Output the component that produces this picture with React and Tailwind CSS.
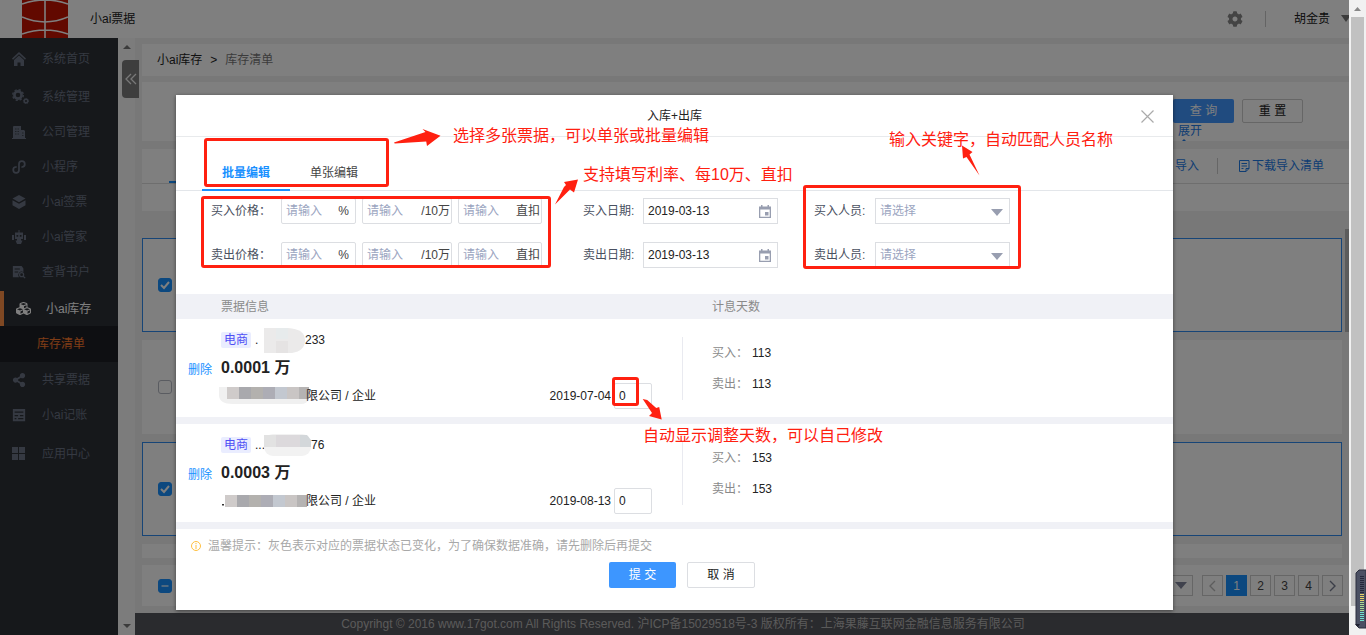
import { useState } from "react";
import { FaCubes, FaShareAlt, FaCog } from "react-icons/fa";

const MENU_TOP = [
  { name: "系统管理", icon: GearsIcon },
  { name: "公司管理", icon: BuildingIcon },
  { name: "小程序", icon: MiniAppIcon },
  { name: "小ai签票", icon: StackIcon },
  { name: "小ai管家", icon: RobotIcon },
  { name: "查背书户", icon: SearchDocIcon },
];

const MENU_BOTTOM = [
  { name: "共享票据", icon: FaShareAlt },
  { name: "小ai记账", icon: LedgerIcon },
];

const BILLS = [
  { id: 1, no: "233", dots: ".", amount: "0.0001 万", date: "2019-07-04", days: 113 },
  { id: 2, no: "76", dots: "...", amount: "0.0003 万", date: "2019-08-13", days: 153 },
];

export default function App() {
  return (
    <div className="flex h-screen overflow-hidden bg-[#f1f1f1] font-['Liberation_Sans','Noto_Sans_CJK_SC',sans-serif] text-xs text-[#222]">
      <div className="relative flex min-w-0 flex-1 flex-col bg-[#f0f0f0]">
        <Header />
        <div className="flex min-h-0 flex-1">
          <Sidebar />
          <SideScroll />
          <Content />
        </div>
        <div className="absolute inset-0 flex items-start justify-center bg-black/50 pt-[95px]">
          <BillDialog />
        </div>
      </div>
      <PageScroll />
    </div>
  );
}

function Header() {
  return (
    <header className="flex h-[38px] shrink-0 items-center overflow-hidden bg-white pl-[22px]">
      <svg width="46" height="38" viewBox="0 0 46 38" fill="none" stroke="#fff" strokeWidth="1.6">
        <path d="M0 0h46v38H0z" fill="#c41200" stroke="none" />
        <path d="M23 0v38M0 4Q23-4 46 4M0 17Q23 27 46 17M0 34Q23 26 46 34" />
      </svg>
      <h1 className="ml-[22px] leading-4">小ai票据</h1>
      <div className="ml-auto flex items-center">
        <FaCog size={16} className="text-[#888]" />
        <span className="ml-[22px] h-4 w-px bg-[#c8c8c8]" />
        <span className="ml-7 leading-4">胡金贵</span>
        <svg width="8" height="8" viewBox="0 0 8 8" className="ml-[11px]" fill="#777">
          <path d="M0 0h10L5 7z" />
        </svg>
      </div>
    </header>
  );
}

function MenuItem({ name, icon: Icon }) {
  return (
    <a href="#" className="flex h-[35px] items-center pl-3 text-[#6a7384]">
      <span className="w-[30px]"><Icon size={14} /></span>
      {name}
    </a>
  );
}

function Sidebar() {
  return (
    <nav className="w-[118px] shrink-0 bg-[#2d3037] pt-[3px]">
      <MenuItem name="系统首页" icon={HomeIcon} />
      <div className="pb-[2px] pt-[3px]">
        {MENU_TOP.map((m) => <MenuItem key={m.name} {...m} />)}
      </div>
      <a href="#" className="flex h-[35px] items-center border-l-4 border-[#ff9147] pl-3 text-white">
        <span className="w-[30px]"><FaCubes size={15} /></span>
        小ai库存
      </a>
      <a href="#" className="flex h-9 items-center bg-[#1d1f24] pl-[37px] text-[#ff7a2c]">
        库存清单
      </a>
      <div className="pb-1">
        {MENU_BOTTOM.map((m) => <MenuItem key={m.name} {...m} />)}
      </div>
      <MenuItem name="应用中心" icon={AppsIcon} />
    </nav>
  );
}

function SideScroll() {
  return (
    <div className="relative flex w-[17px] shrink-0 flex-col items-center justify-between bg-[#f8f8f8] py-[7px]">
      <svg width="8" height="4" viewBox="0 0 8 4" fill="#777"><path d="M0 4l4-4 4 4z" /></svg>
      <svg width="8" height="4" viewBox="0 0 8 4" fill="#777"><path d="M0 0l4 4 4-4z" /></svg>
      <button aria-label="收起菜单" className="absolute left-1 top-[22px] flex h-[38px] w-[17px] items-center justify-center rounded-l bg-[#7c7c7c]">
        <svg width="12" height="12" viewBox="0 0 12 12" fill="none" stroke="#f0f0f0" strokeWidth="1.3">
          <path d="M6 1L1 6l5 5M11 1L6 6l5 5" />
        </svg>
      </button>
    </div>
  );
}

function CheckBox({ state, label }) {
  const [on, setOn] = useState(state !== "off");
  return (
    <label className="grid size-[14px] place-items-center">
      <input
        type="checkbox" aria-label={label} checked={on} onChange={(e) => setOn(e.target.checked)}
        className="col-start-1 row-start-1 size-[14px] appearance-none rounded-[3px] border border-[#b4b8c2] bg-white checked:border-[#1890ff] checked:bg-[#1890ff]"
      />
      {on && (
        <svg width="10" height="10" viewBox="0 0 10 10" className="pointer-events-none col-start-1 row-start-1" fill="none" stroke="#fff" strokeWidth={state === "part" ? 1.2 : 2}>
          <path d={state === "part" ? "M1.500 5h7" : "M1 5l3 3 5-6"} />
        </svg>
      )}
    </label>
  );
}

function Content() {
  return (
    <main className="flex min-w-0 flex-1 flex-col">
      <div className="flex min-h-0 flex-1 flex-col pl-[7px] pt-[6px]">
        <div className="flex h-8 shrink-0 items-center gap-2 bg-white pl-[15px] leading-4">
          <a href="#">小ai库存</a>
          <span>&gt;</span>
          <span className="text-[#777]">库存清单</span>
        </div>

        <section className="mt-[6px] flex h-[59px] shrink-0 justify-end overflow-hidden bg-white pr-[46px] pt-[17px]">
          <div>
            <div className="flex gap-2">
              <button className="h-6 w-[61px] rounded-[2px] bg-[#4096ff] text-white">查 询</button>
              <button className="h-6 w-[61px] rounded-[2px] border border-[#ccc] bg-white">重 置</button>
            </div>
            <a href="#" className="ml-[5px] flex w-6 flex-col items-center leading-4 text-[#1e7be6]">
              展开
              <svg width="6" height="4" viewBox="0 0 6 4" className="mr-3" fill="#1e7be6"><path d="M0 3l3-3 3 3z" /></svg>
            </a>
          </div>
        </section>

        <section className="mt-2 h-[62px] shrink-0 bg-white">
          <div className="flex h-[35px] items-center justify-end border-b border-[#ddd] pr-[25px] leading-4 text-[#1e7be6]">
            <span className="mr-auto ml-[27px] w-[60px] self-end border-b-2 border-[#1890ff]" />
            <a href="#">导入</a>
            <span className="ml-[18px] mr-[21px] h-4 w-px bg-[#ccc]" />
            <a href="#" className="flex items-center gap-[2px]">
              <svg width="11" height="12" viewBox="0 0 11 12" fill="none" stroke="currentColor">
                <path d="M7 11.500H.5V.5h9.500v8zM7 11.500V8.500h3M2.500 3.500h5.500M2.500 6h5.500M2.500 8.500h2" />
              </svg>
              下载导入清单
            </a>
          </div>
        </section>

        <div className="relative mr-[7px] mt-[27px] flex min-h-0 flex-1 flex-col gap-2 overflow-hidden">
          {["on", "off", "on", "off"].map((s, i) => (
            <div key={i} className={`flex h-[94px] shrink-0 items-center bg-white pl-4 ${s === "on" ? "border border-[#2f8bef] pl-[15px]" : ""}`}>
              <CheckBox state={s} label={`票据${i + 1}`} />
            </div>
          ))}
        </div>

        <div className="mb-[7px] mt-[7px] flex h-[41px] shrink-0 items-center gap-[3px] bg-white pl-4 pr-[6px]">
          <CheckBox state="part" label="全选" />
          <div className="ml-auto mr-[6px] flex h-[21px] w-[60px] items-center justify-end border border-[#ccc] pr-[5px]">
            <svg width="12" height="7" viewBox="0 0 12 7" fill="#80859a"><path d="M0 0h12L6 7z" /></svg>
          </div>
          <PageButton label="上一页"><Chevron d="M7 1L2 6l5 5" color="#bbb" /></PageButton>
          <button className="size-[21px] bg-[#1890ff] text-white">1</button>
          <PageButton>2</PageButton>
          <PageButton>3</PageButton>
          <PageButton>4</PageButton>
          <PageButton label="下一页"><Chevron d="M2 1l5 5-5 5" color="#777c90" /></PageButton>
        </div>
      </div>
      <div className="absolute right-0 top-[229px] h-[103px] w-1 bg-[#b8b8b8]" />
      <footer className="flex h-[22px] shrink-0 items-center justify-center bg-[#55565c] leading-4 text-[#b5b5b5]">
        <p className="pr-[118px]">Copyrihgt © 2016 www.17got.com All Rights Reserved. 沪ICP备15029518号-3 版权所有：上海果藤互联网金融信息服务有限公司</p>
      </footer>
    </main>
  );
}

function PageButton({ label, children }) {
  return (
    <button aria-label={label} className="flex size-[21px] items-center justify-center border border-[#ccc] bg-white text-[#444]">
      {children}
    </button>
  );
}

function Chevron({ d, color }) {
  return (
    <svg width="9" height="12" viewBox="0 0 9 12" fill="none" stroke={color} strokeWidth="1.4"><path d={d} /></svg>
  );
}

function BillDialog() {
  const [tab, setTab] = useState(0);
  return (
    <div role="dialog" aria-labelledby="dialog-title" className="relative w-[997px] bg-white pb-[22px] shadow-[0_1px_4px_rgba(0,0,0,0.5)]">
      <div className="relative flex h-[42px] items-center justify-center border-b border-[#e8eaec]">
        <h2 id="dialog-title" className="leading-4">入库+出库</h2>
        <button aria-label="关闭" className="absolute right-[19px] top-[15px]">
          <svg width="13" height="13" viewBox="0 0 13 13" stroke="#aaa" strokeWidth="1.2"><path d="M.5.5l12 12M12.500.5l-12 12" /></svg>
        </button>
      </div>

      <div className="flex h-[54px] items-end border-b border-[#e3e6ea] pl-[26px]">
        {["批量编辑", "单张编辑"].map((t, i) => (
          <button
            key={t} onClick={() => setTab(i)}
            className={`-mb-px border-b-2 px-5 pb-2 leading-4 ${
              tab === i ? "border-[#1890ff] font-bold text-[#1890ff]" : "border-transparent text-[#444]"
            }`}>
            {t}
          </button>
        ))}
      </div>

      <form className="flex h-[103px] flex-col gap-[18px] pl-[35px] pt-[7px]">
        <FormRow kind="买入" />
        <FormRow kind="卖出" />
      </form>

      <table className="w-full table-fixed border-separate border-spacing-0 text-left">
        <thead className="bg-[#f0f1f6] text-[#8a8a8a]">
          <tr className="h-[25px]">
            <th className="w-[506px] pl-[45px] font-normal leading-4">票据信息</th>
            <th className="pl-[30px] font-normal leading-4">计息天数</th>
          </tr>
        </thead>
        <tbody>
          {BILLS.map((b) => <BillRow key={b.id} bill={b} />)}
        </tbody>
      </table>

      <p className="mt-2 flex items-center gap-[7px] pl-[15px] leading-[18px] text-[#a8a8a8]">
        <svg width="10" height="10" viewBox="0 0 10 10" fill="none" stroke="#ffbf3f">
          <circle cx="5" cy="5" r="4.500" /><path d="M5 2v1.200M5 4v4" />
        </svg>
        温馨提示：灰色表示对应的票据状态已变化，为了确保数据准确，请先删除后再提交
      </p>
      <div className="mt-[7px] flex justify-center gap-[11px] pl-[15px]">
        <button className="h-[26px] w-[67px] rounded-[2px] bg-[#3d96ff] text-white">提 交</button>
        <button className="h-[26px] w-[68px] rounded-[2px] border border-[#dcdee2] bg-white">取 消</button>
      </div>

      <Annotations />
    </div>
  );
}

function PriceInput({ label, unit, className }) {
  return (
    <label className={`flex h-[26px] items-center rounded-[2px] border border-[#dcdee2] pl-1 ${className}`}>
      <input aria-label={label} placeholder="请输入" className="w-0 min-w-0 flex-1 outline-none placeholder:text-[#9ba5bf]" />
      <span className="shrink-0 text-[#444]">{unit}</span>
    </label>
  );
}

function FormRow({ kind }) {
  return (
    <div className="flex items-center text-[#495060]">
      <span className="w-[70px]">{kind}价格：</span>
      <PriceInput label={`${kind}利率`} unit="%" className="w-[75px] pr-[6px]" />
      <PriceInput label={`${kind}每10万`} unit="/10万" className="ml-[6px] w-[90px] pr-[1px]" />
      <PriceInput label={`${kind}直扣`} unit="直扣" className="ml-[6px] w-[84px] pr-[1px]" />
      <label className="ml-[41px] flex items-center">
        <span className="w-[60px]">{kind}日期:</span>
        <span className="flex h-[26px] w-[135px] items-center border border-[#dcdee2] pl-1 pr-[6px]">
          <input defaultValue="2019-03-13" className="w-0 min-w-0 flex-1 text-[#222] outline-none" />
          <svg width="12" height="13" viewBox="0 0 12 13" fill="#989eb0">
            <path d="M2 0h1.500v1.500h5V0H10v1.500h2V13H0V1.500h2zM1.300 4.500v7.200h9.400V4.500z" fillRule="evenodd" />
            <path d="M6 7h3.500v3.500H6z" />
          </svg>
        </span>
      </label>
      <label className="ml-9 flex items-center">
        <span className="w-[61px]">{kind}人员:</span>
        <span className="grid w-[135px] items-center">
          <select className="col-start-1 row-start-1 h-[26px] appearance-none border border-[#dcdee2] pl-1 text-[#9ba5bf] outline-none">
            <option>请选择</option>
          </select>
          <svg width="12" height="7" viewBox="0 0 12 7" fill="#989eb0" className="pointer-events-none col-start-1 row-start-1 mr-[7px] mt-[3px] justify-self-end">
            <path d="M0 0h12L6 7z" />
          </svg>
        </span>
      </label>
    </div>
  );
}

function BillRow({ bill }) {
  return (
    <tr className="h-[105px]">
      <td className="border-b-[7px] border-[#f0f1f6] align-top">
        <div className="flex">
          <a href="#" className="mt-[43px] w-[45px] pl-3 leading-4 text-[#1890ff]">删除</a>
          <div className="min-w-0 flex-1 pt-3">
            <div className="flex h-[18px] items-center">
              <span className="rounded-[2px] bg-[#eaedff] px-[3px] leading-4 text-[#4f4ff5]">电商</span>
              <span className="ml-1 w-[9px] leading-4">{bill.dots}</span>
              <NoMask wide={bill.id === 2} />
              <span className="leading-4">{bill.no}</span>
            </div>
            <div className="mt-[7px] text-base font-bold leading-6">{bill.amount}</div>
            <div className="flex h-8 items-center">
              <CompanyMask first={bill.id === 1} />
              <span className="leading-4">限公司 / 企业</span>
              <span className="ml-auto leading-4">{bill.date}</span>
              <input aria-label="调整天数" defaultValue="0" className="ml-[3px] mr-[30px] h-[26px] w-[38px] rounded-[2px] border border-[#dcdee2] pl-1 outline-none" />
            </div>
          </div>
        </div>
      </td>
      <td className="border-b-[7px] border-[#f0f1f6] align-top">
        <dl className="mt-[18px] grid h-[63px] grid-cols-[40px_1fr] content-center gap-y-[15px] border-l border-[#e9eaf0] pl-[29px] leading-4">
          <dt className="text-[#8a8a8a]">买入：</dt>
          <dd>{bill.days}</dd>
          <dt className="text-[#8a8a8a]">卖出：</dt>
          <dd>{bill.days}</dd>
        </dl>
      </td>
    </tr>
  );
}

// pixel mosaic over the bill number
function NoMask({ wide }) {
  if (wide) {
    return (
      <svg width="47" height="22" viewBox="0 0 47 22" className="shrink-0">
        <rect width="47" height="22" rx="9" fill="#f2f2f2" />
        <path d="M0 1h12v12H0z" fill="#e2e2e2" />
        <path d="M12 1h24v12H12z" fill="#dcd9dc" />
        <path d="M36 1h7l4 5v7H36z" fill="#d3d7da" />
      </svg>
    );
  }
  return (
    <svg width="41" height="26" viewBox="0 0 41 26" className="shrink-0">
      <path d="M0 1h24q17 1 17 12T28 26H0z" fill="#ebeaea" />
      <path d="M12 1h12v11H12z" fill="#e7ebec" />
      <path d="M12 14h12v12H12z" fill="#e5e3e3" />
    </svg>
  );
}

// pixel mosaic over the company name
function CompanyMask({ first }) {
  const cells = ["#cfcbca", "#a9a9ad", "#b3b1ae", "#adadb5", "#c3c8d0", "#c9c5c4", "#b5b3b3"];
  return (
    <svg width="85" height="20" viewBox="0 0 85 20" className="shrink-0 overflow-visible">
      {first && <path d="M-2 1h90v12q-2 5-8 5H12Q-2 18-2 9z" fill="#f0f0f0" />}
      {!first && <path d="M1 13h2v1.500H1z" fill="#333" />}
      {cells.map((c, i) => (
        <rect key={i} x={(first ? 6 : 4) + i * 12} y={first ? 1 : 4} width={i === 6 ? 10 : 12} height="12" fill={c} />
      ))}
    </svg>
  );
}

// red guide marks laid over the dialog
function Annotations() {
  return (
    <div className="pointer-events-none absolute inset-0 text-base leading-6 text-[#ff2010]">
      <div className="absolute left-[28px] top-[43px] h-[49px] w-[185px] rounded-[3px] border-3 border-[#ff2010]" />
      <div className="absolute left-[25px] top-[101px] h-[72px] w-[350px] rounded-[3px] border-3 border-[#ff2010]" />
      <div className="absolute left-[627px] top-[90px] h-[84px] w-[218px] rounded-[3px] border-3 border-[#ff2010]" />
      <div className="absolute left-[436px] top-[282px] h-[29px] w-[27px] rounded-[3px] border-3 border-[#ff2010]" />
      <svg className="absolute inset-0" width="997" height="515" viewBox="176 95 997 515" fill="#ff2010">
        <path d="M394 142.500L425.500 132l-3-3 18 6.700-13.500 10.300-.8-4.500-31.500 2z" />
        <path d="M555 204.500l9-17.500 2-2-2-3 14-2.500-4 13-4-3z" />
        <path d="M979.500 175.500l-13-18.500-3.500 1.500-1-13 10.500 6.500-3 2.500z" />
        <path d="M642.700 399l4.500 1 9 8 3-1 2.500 12.500-12.700-3.500 3-3z" />
      </svg>
      <p className="absolute left-[277px] top-[29px] whitespace-nowrap">选择多张票据，可以单张或批量编辑</p>
      <p className="absolute left-[407px] top-[68px] whitespace-nowrap">支持填写利率、每10万、直扣</p>
      <p className="absolute left-[713px] top-[33px] whitespace-nowrap">输入关键字，自动匹配人员名称</p>
      <p className="absolute left-[467px] top-[329px] whitespace-nowrap">自动显示调整天数，可以自己修改</p>
    </div>
  );
}

function PageScroll() {
  return (
    <div className="relative flex w-[17px] shrink-0 flex-col items-center pb-[29px] pt-[7px]">
      <svg width="7" height="4" viewBox="0 0 7 4" className="shrink-0" fill="#888"><path d="M0 4l3.500-4L7 4z" /></svg>
      <div className="mt-[6px] w-[13px] flex-1 bg-[#c1c1c1]" />
      <svg width="11" height="60" viewBox="0 0 11 60" className="absolute bottom-[6px] right-0">
        <path d="M4 1h7v58H4l-3-3V4z" fill="#4b5063" stroke="#2c2f3e" />
        {Array.from({ length: 23 }).map((_, i) => (
          <path key={i} d={`M5 ${7.5 + i * 2}h4`} stroke={i < 9 ? "#24273a" : i < 13 ? "#e6d36a" : i < 18 ? "#a6dc94" : "#6fe0cf"} />
        ))}
        <path d="M0 55h5l-2 3z" fill="#1e2130" />
      </svg>
    </div>
  );
}

function HomeIcon({ size }) {
  return (
    <svg width={size} height={size} viewBox="0 0 14 14" fill="currentColor">
      <path d="M7 0l7 6.500-1 1.200-6-5.400-6 5.400-1-1.200z" />
      <path d="M7 3.600l5 4.500V14H8.500v-3.500h-3V14H2V8.100z" />
    </svg>
  );
}

function GearsIcon() {
  return (
    <svg width="17" height="15" viewBox="0 0 17 15" fill="none" stroke="currentColor">
      <circle cx="6" cy="6" r="3.600" strokeWidth="2.600" />
      <circle cx="6" cy="6" r="5.300" strokeWidth="1.400" strokeDasharray="2.200 1.960" />
      <circle cx="14" cy="12" r="1.800" strokeWidth="1.500" />
      <circle cx="14" cy="12" r="2.600" strokeWidth=".8" strokeDasharray="1.100 .94" />
    </svg>
  );
}

function BuildingIcon({ size }) {
  return (
    <svg width={size} height={size} viewBox="0 0 14 14">
      <path d="M1 13V1.500L2 1h7v4h3l1 1v7h1v1H0v-1z" fill="currentColor" />
      <path d="M3 4h4M3 6.500h4M3 9h4M10 8h1.500M10 10.500h1.500" stroke="#2d3037" strokeWidth=".7" strokeDasharray="1.500 1" />
    </svg>
  );
}

function StackIcon({ size }) {
  return (
    <svg width={size} height={size} viewBox="0 0 14 14" fill="currentColor">
      <path d="M7 0l6.500 3.600L7 7.200.5 3.600z" />
      <path d="M.5 5.200L7 8.800l6.500-3.600v5L7 14 .5 10.200z" />
    </svg>
  );
}

function RobotIcon({ size }) {
  return (
    <svg width={size} height={size} viewBox="0 0 14 14" fill="currentColor">
      <path fillRule="evenodd" d="M6.500 0h1v2.500H11V9H9v1.500h1.500L9 14H5l-1.500-3.500H5V9H3V2.500h3.500zM4.500 5v1.700h1.700V5zm3.300 0v1.700h1.700V5z" />
      <path d="M0 5h2v5H0zM12 5h2v5h-2z" />
    </svg>
  );
}

function MiniAppIcon({ size }) {
  return (
    <svg width={size} height={size} viewBox="0 0 16 16" fill="none" stroke="currentColor" strokeWidth="2" strokeLinecap="round">
      <path d="M4.500 8A3.300 3.300 0 1 0 8 11.300V4.700A3.300 3.300 0 1 1 11.500 8" />
    </svg>
  );
}

function SearchDocIcon({ size }) {
  return (
    <svg width={size} height={size} viewBox="0 0 16 16" fill="currentColor">
      <path fillRule="evenodd" d="M1 1h10l2 3v4a4 4 0 0 0-5 6H1zM3 4v1.200h6V4zm0 3.500v1.200h4V7.500z" />
      <circle cx="11" cy="11" r="2.300" fill="none" stroke="currentColor" strokeWidth="1.400" />
      <path d="M12.500 12.500l2.500 2.500" stroke="currentColor" strokeWidth="1.600" />
    </svg>
  );
}

function LedgerIcon({ size }) {
  return (
    <svg width={size} height={size} viewBox="0 0 16 16" fill="currentColor">
      <path fillRule="evenodd" d="M1 1h14v14H1zM3 4v1.300h10V4zm0 4v1.300h4V8zm6 0v1.300h4V8zm-6 3.500v1.300h2v-1.300zm4 0v1.300h6v-1.300z" />
    </svg>
  );
}

function AppsIcon({ size }) {
  return (
    <svg width={size - 1} height={size - 1} viewBox="0 0 13 13" fill="currentColor">
      <path d="M0 0h6v6H0zM7 0h6v6H7zM0 7h6v6H0zM7 7h6v6H7z" />
    </svg>
  );
}
